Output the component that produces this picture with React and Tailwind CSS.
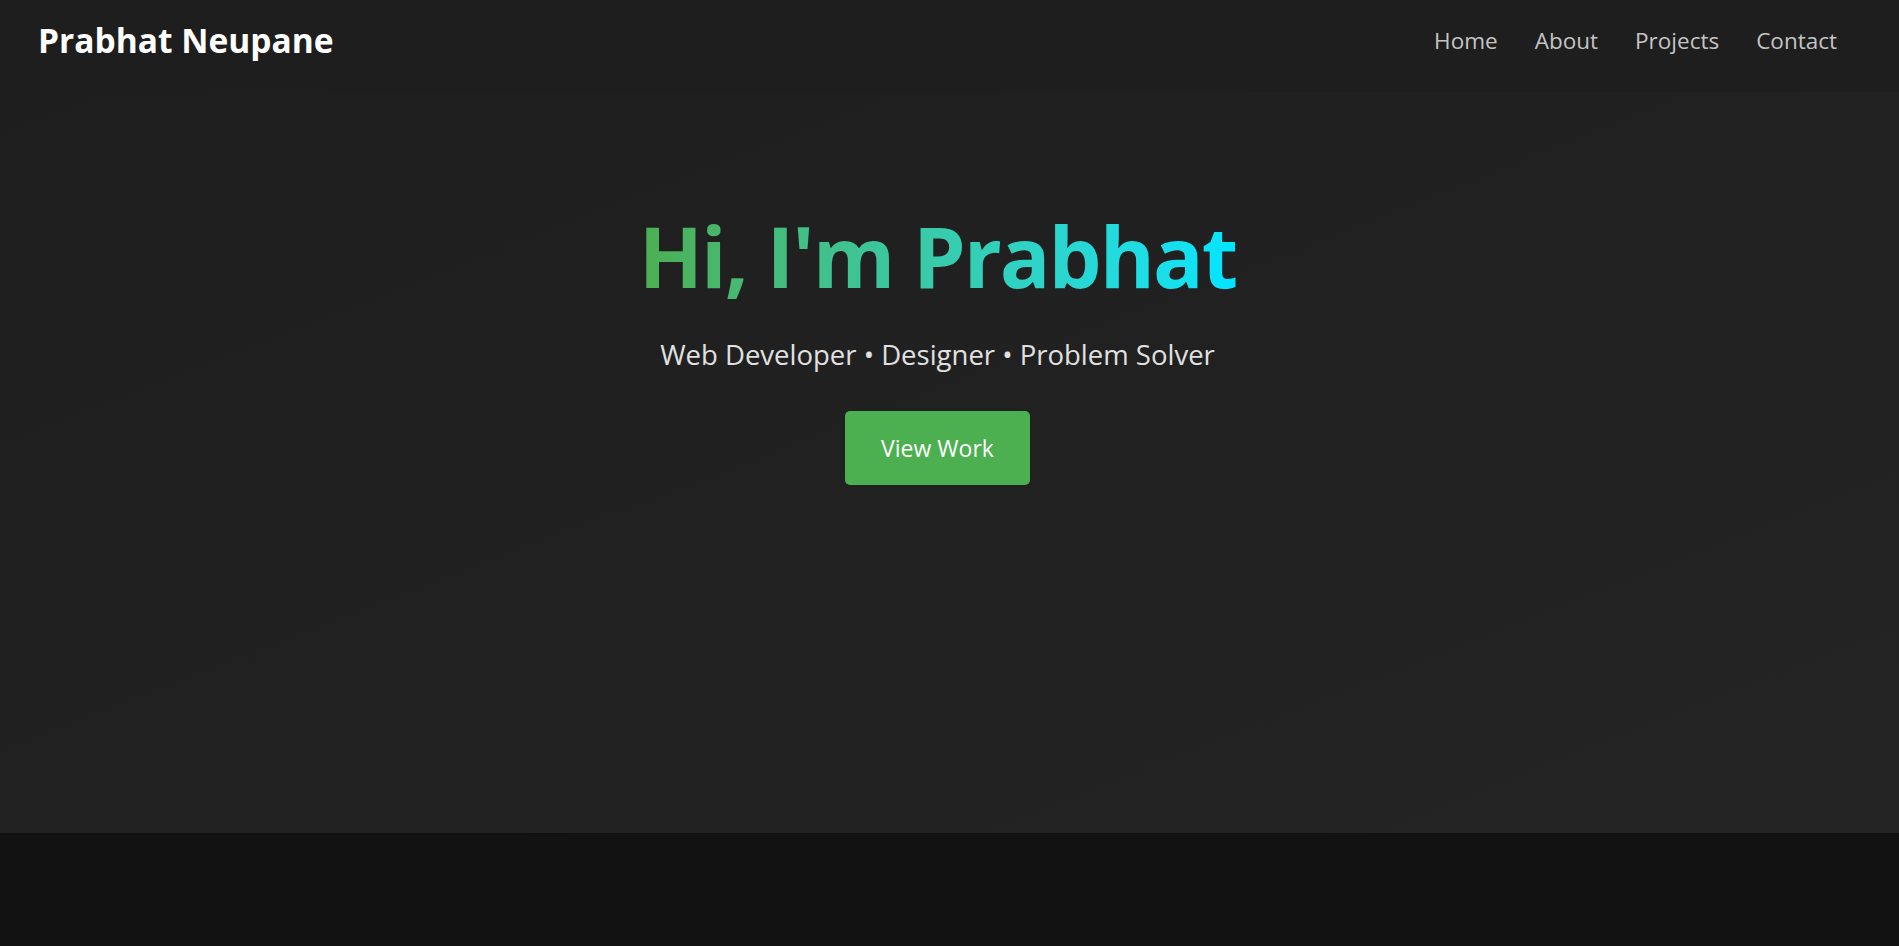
import React from 'react';

const font = { fontFamily: '"Open Sans", "Noto Sans", sans-serif' };

function Header() {
  return (
    <header className="h-[92px] bg-[#1e1e1e] flex items-center justify-between pl-[38px] pr-[62px] pb-[10px]">
      <h1 className="text-[33.5px] font-bold text-white leading-none">Prabhat Neupane</h1>
      <nav className="flex gap-[37px] text-[22.5px] text-[#c4c4c4]">
        <a href="#">Home</a>
        <a href="#">About</a>
        <a href="#">Projects</a>
        <a href="#">Contact</a>
      </nav>
    </header>
  );
}

function Hero() {
  return (
    <section className="h-[741px] bg-gradient-to-br from-[#1e1e1e] to-[#242424] flex flex-col items-center pt-[114px]">
      <div className="flex flex-col items-center mr-[24px]">
        <h2 className="text-[84px] font-bold leading-[1.2] tracking-[-2px] bg-gradient-to-r from-[#4caf50] to-[#00e5ff] bg-clip-text text-transparent">
          Hi, I'm Prabhat
        </h2>
        <p className="mt-[27px] text-[27.5px] leading-[1.5] text-[#e0e0e0]">
          Web Developer • Designer • Problem Solver
        </p>
        <button className="mt-[36px] w-[185px] h-[74px] rounded-[5px] bg-[#4caf50] text-white text-[23px]">
          View Work
        </button>
      </div>
    </section>
  );
}

export default function App() {
  return (
    <div style={font} className="min-h-screen bg-[#121212]">
      <Header />
      <Hero />
      <section className="h-[500px] bg-[#121212]"></section>
    </div>
  );
}
